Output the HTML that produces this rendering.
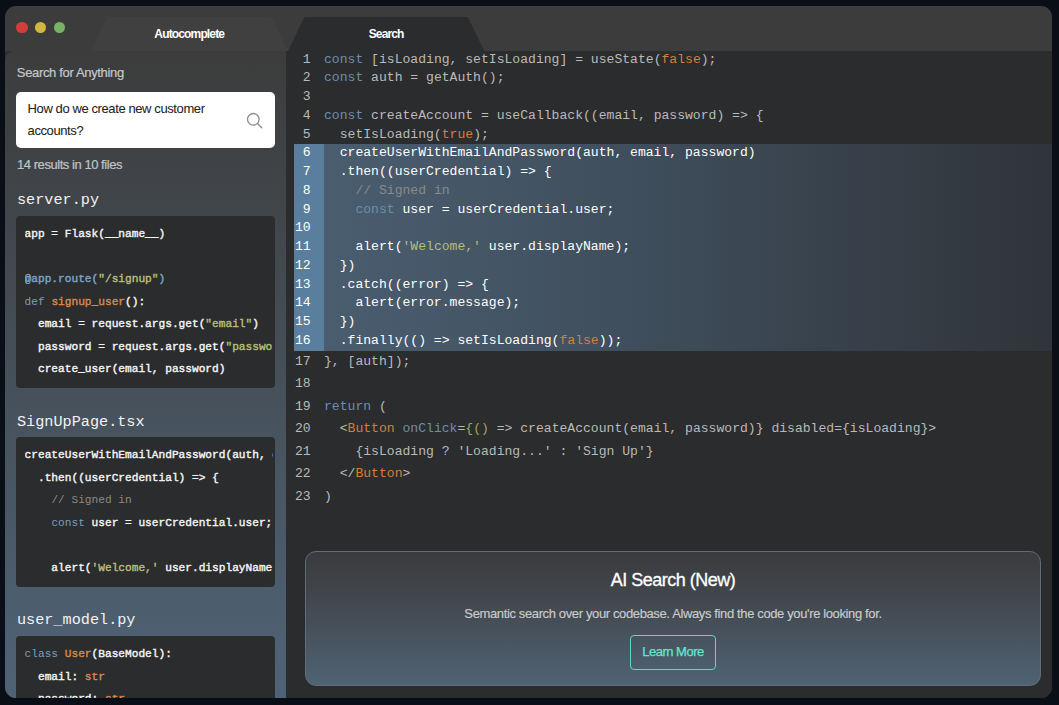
<!DOCTYPE html>
<html><head><meta charset="utf-8">
<style>
*{margin:0;padding:0;box-sizing:border-box}
html,body{width:1059px;height:705px;overflow:hidden;background:#0a0e16}
body{position:relative;font-family:"Liberation Sans",sans-serif}
.win{position:absolute;left:5px;top:6px;width:1047px;height:692px;border-radius:11px;background:#3c3c3c;overflow:hidden}
.dot{position:absolute;top:15.6px;width:11.6px;height:11.6px;border-radius:50%}
.tab{position:absolute;top:11px;height:34px}
.tabtxt{position:absolute;top:0;height:34px;line-height:34px;color:#fff;font-size:12px;font-weight:bold;text-align:center;white-space:nowrap}
.panel{position:absolute;left:0;top:45px;width:281px;height:647px;border-radius:10px 0 0 0;background:linear-gradient(180deg,#3c3c3c 0%,#3e4042 10%,#4f6376 100%);overflow:hidden}
.editor{position:absolute;left:281px;top:45px;width:766px;height:647px;background:#2b2c2e}
.ui{position:absolute;white-space:nowrap}
.mono{font-family:"Liberation Mono",monospace}
.blk{position:absolute;left:11px;width:259px;background:#2b2c2e;border-radius:4px;overflow:hidden}
.blk .in{position:absolute;left:8.6px;top:7px;width:248.9px;bottom:0;overflow:hidden}
.in div{font-family:"Liberation Mono",monospace;font-size:11.17px;line-height:22.5px;height:22.5px;white-space:pre;color:#f4f4f4;font-weight:normal;-webkit-text-stroke:0.4px currentColor}
.fname{position:absolute;left:12px;font-family:"Liberation Mono",monospace;font-size:15.2px;color:#f2f2f2;white-space:pre}
.k{color:#7a9cbe;-webkit-text-stroke:0}
.kb{color:#7ea3c6}
.o{color:#d9884a}
.s{color:#b5bf78}
.c{color:#8a8a8a;font-weight:normal;-webkit-text-stroke:0}
.lines{position:absolute;left:0;top:0}
.ln{position:absolute;left:0;width:766px;height:18.75px;font-family:"Liberation Mono",monospace;font-size:13.08px;white-space:pre;color:#bababa}
.ln .n{position:absolute;left:0;width:24.6px;text-align:right}
.ln.hl{color:#fff}
.ln .k{font-weight:normal;color:#6d8eab}
.ln .o{color:#d27f40}
.y{color:#a3a266}
.ln .t{position:absolute;left:38px}
</style></head><body>
<div class="win">
  <div class="dot" style="left:11.2px;background:#d03d3d"></div>
  <div class="dot" style="left:29.7px;background:#d2b63e"></div>
  <div class="dot" style="left:48.8px;background:#77b268"></div>
  <svg style="position:absolute;left:0;top:0" width="1047" height="45">
    <polygon points="86,45 102,11 266.5,11 283,45" fill="#404040"/>
    <polygon points="283,45 299.5,11 462.7,11 479.3,45" fill="#2b2c2e"/>
  </svg>
  <div class="tabtxt" style="left:102px;width:164.5px;top:11px;letter-spacing:-0.85px">Autocomplete</div>
  <div class="tabtxt" style="left:299.5px;width:163.2px;top:11px;letter-spacing:-0.9px">Search</div>

  <div style="position:absolute;left:0;top:45px;width:14px;height:14px;background:#303132"></div>
  <div class="panel">
    <div class="ui" style="left:11.8px;top:14px;font-size:13px;color:#c5c8cc;letter-spacing:-0.34px;-webkit-text-stroke:0.2px #c5c8cc">Search for Anything</div>
    <div style="position:absolute;left:11px;top:41px;width:259px;height:56px;background:#fff;border-radius:5px">
      <div class="ui" style="left:11.6px;top:6px;font-size:13px;line-height:22px;color:#222;letter-spacing:-0.4px;-webkit-text-stroke:0.05px #222;white-space:normal;width:200px">How do we create new customer<br>accounts?</div>
      <svg style="position:absolute;left:228px;top:19px" width="20" height="20" viewBox="0 0 20 20">
        <circle cx="9.3" cy="8.3" r="5.8" fill="none" stroke="#8a8d92" stroke-width="1.3"/>
        <line x1="13.5" y1="12.5" x2="17.8" y2="16.8" stroke="#8a8d92" stroke-width="1.3" stroke-linecap="round"/>
      </svg>
    </div>
    <div class="ui" style="left:12px;top:106px;font-size:13px;color:#c0c4c8;letter-spacing:-0.45px;-webkit-text-stroke:0.2px #c0c4c8">14 results in 10 files</div>

    <div class="fname" style="top:139.5px">server.py</div>
    <div class="blk" style="top:165px;height:172px"><div class="in">
      <div>app = Flask(__name__)</div>
      <div> </div>
      <div><span class="kb">@app.route(</span><span class="s">"/signup"</span><span class="kb">)</span></div>
      <div><span class="k">def</span> <span class="o">signup_user</span>():</div>
      <div>  email = request.args.get(<span class="s">"email"</span>)</div>
      <div>  password = request.args.get(<span class="s">"password"</span>)</div>
      <div>  create_user(email, password)</div></div>
    </div>

    <div class="fname" style="top:362px">SignUpPage.tsx</div>
    <div class="blk" style="top:386px;height:150px"><div class="in">
      <div>createUserWithEmailAndPassword(auth, email, password)</div>
      <div>  .then((userCredential) =&gt; {</div>
      <div>    <span class="c">// Signed in</span></div>
      <div>    <span class="k">const</span> user = userCredential.user;</div>
      <div> </div>
      <div>    alert(<span class="s">'Welcome,'</span> user.displayName);</div></div>
    </div>

    <div class="fname" style="top:560px">user_model.py</div>
    <div class="blk" style="top:585px;height:200px"><div class="in">
      <div><span class="k">class</span> <span class="o">User</span>(BaseModel):</div>
      <div>  email: <span class="o">str</span></div>
      <div>  password: <span class="o">str</span></div></div>
    </div>
  </div>

  <div class="editor">
    <div style="position:absolute;left:8px;top:93.25px;width:758px;height:206.25px;background:linear-gradient(90deg,#4b5f72 0%,#3f4e5c 45%,#30343a 100%)"></div>
    <div style="position:absolute;left:8px;top:93.25px;width:30px;height:206.25px;background:#5a7e9e"></div>
    <div id="code">
    <div class="ln" style="top:-0.5px;height:18.75px;line-height:18.75px"><span class="n">1</span><span class="t"><span class="k">const</span> [isLoading, setIsLoading] = useState(<span class="o">false</span>);</span></div>
    <div class="ln" style="top:18.25px;height:18.75px;line-height:18.75px"><span class="n">2</span><span class="t"><span class="k">const</span> auth = getAuth();</span></div>
    <div class="ln" style="top:37.0px;height:18.75px;line-height:18.75px"><span class="n">3</span><span class="t"></span></div>
    <div class="ln" style="top:55.75px;height:18.75px;line-height:18.75px"><span class="n">4</span><span class="t"><span class="k">const</span> createAccount = useCallback((email, password) =&gt; {</span></div>
    <div class="ln" style="top:74.5px;height:18.75px;line-height:18.75px"><span class="n">5</span><span class="t">  setIsLoading(<span class="o">true</span>);</span></div>
    <div class="ln hl" style="top:93.25px;height:18.75px;line-height:18.75px"><span class="n">6</span><span class="t">  createUserWithEmailAndPassword(auth, email, password)</span></div>
    <div class="ln hl" style="top:112.0px;height:18.75px;line-height:18.75px"><span class="n">7</span><span class="t">  .then((userCredential) =&gt; {</span></div>
    <div class="ln hl" style="top:130.75px;height:18.75px;line-height:18.75px"><span class="n">8</span><span class="t">    <span class="c">// Signed in</span></span></div>
    <div class="ln hl" style="top:149.5px;height:18.75px;line-height:18.75px"><span class="n">9</span><span class="t">    <span class="k">const</span> user = userCredential.user;</span></div>
    <div class="ln hl" style="top:168.25px;height:18.75px;line-height:18.75px"><span class="n">10</span><span class="t"></span></div>
    <div class="ln hl" style="top:187.0px;height:18.75px;line-height:18.75px"><span class="n">11</span><span class="t">    alert(<span class="s">'Welcome,'</span> user.displayName);</span></div>
    <div class="ln hl" style="top:205.75px;height:18.75px;line-height:18.75px"><span class="n">12</span><span class="t">  })</span></div>
    <div class="ln hl" style="top:224.5px;height:18.75px;line-height:18.75px"><span class="n">13</span><span class="t">  .catch((error) =&gt; {</span></div>
    <div class="ln hl" style="top:243.25px;height:18.75px;line-height:18.75px"><span class="n">14</span><span class="t">    alert(error.message);</span></div>
    <div class="ln hl" style="top:262.0px;height:18.75px;line-height:18.75px"><span class="n">15</span><span class="t">  })</span></div>
    <div class="ln hl" style="top:280.75px;height:18.75px;line-height:18.75px"><span class="n">16</span><span class="t">  .finally(() =&gt; setIsLoading(<span class="o">false</span>));</span></div>
    <div class="ln" style="top:299.5px;height:22.5px;line-height:22.5px"><span class="n">17</span><span class="t">}, [auth]);</span></div>
    <div class="ln" style="top:322.0px;height:22.5px;line-height:22.5px"><span class="n">18</span><span class="t"></span></div>
    <div class="ln" style="top:344.5px;height:22.5px;line-height:22.5px"><span class="n">19</span><span class="t"><span class="k">return</span> (</span></div>
    <div class="ln" style="top:367.0px;height:22.5px;line-height:22.5px"><span class="n">20</span><span class="t">  &lt;<span class="o">Button</span> <span class="k">onClick</span>=<span class="y">{()</span> =&gt; createAccount(email, password)} disabled={isLoading}&gt;</span></div>
    <div class="ln" style="top:389.5px;height:22.5px;line-height:22.5px"><span class="n">21</span><span class="t">    {isLoading ? 'Loading...' : 'Sign Up'}</span></div>
    <div class="ln" style="top:412.0px;height:22.5px;line-height:22.5px"><span class="n">22</span><span class="t">  &lt;/<span class="o">Button</span>&gt;</span></div>
    <div class="ln" style="top:434.5px;height:22.5px;line-height:22.5px"><span class="n">23</span><span class="t">)</span></div>
    </div><!--code-->

    <div style="position:absolute;left:19px;top:500px;width:736px;height:135px;border-radius:11px;border:1px solid #5f6c79;background:linear-gradient(180deg,#3a3b3d 0%,#434950 40%,#4f6373 100%)">
      <div class="ui" style="left:0;width:734px;text-align:center;top:17.6px;font-size:18px;color:#fff;letter-spacing:-0.5px;-webkit-text-stroke:0.3px #fff">AI Search (New)</div>
      <div class="ui" style="left:0;width:734px;text-align:center;top:54px;font-size:13px;color:#c9cbce;letter-spacing:-0.37px;-webkit-text-stroke:0.15px #c9cbce">Semantic search over your codebase. Always find the code you're looking for.</div>
      <div style="position:absolute;left:324px;top:83px;width:86px;height:35px;border:1px solid #5fd9c4;border-radius:4px;color:#64e6cc;font-size:13px;line-height:32px;text-align:center;letter-spacing:-0.5px;-webkit-text-stroke:0.25px #64e6cc">Learn More</div>
    </div>
  </div>
</div>
</body></html>
